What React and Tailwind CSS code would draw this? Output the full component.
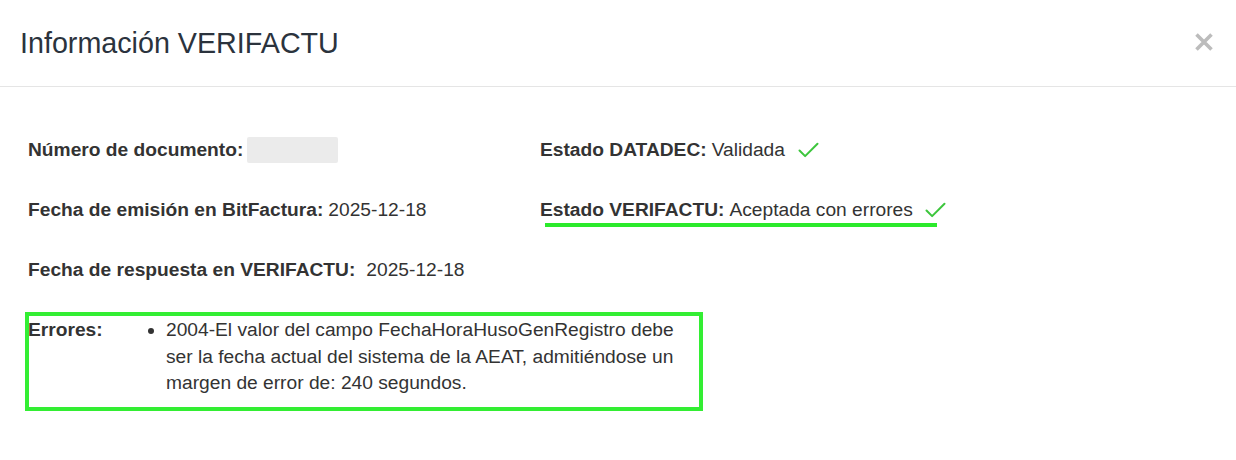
import { Check } from 'lucide-react';

// Fila de datos: etiqueta en negrita + valor
function Campo({ label, children }) {
  return (
    <div className="flex h-[60px] items-center whitespace-nowrap">
      <span className="font-bold">{label}</span>
      {children}
    </div>
  );
}

function CheckVerde({ className = '' }) {
  return <Check className={`text-[#3dc63d] ${className}`} size={27} strokeWidth={1.8} />;
}

export default function App() {
  return (
    <div
      className="w-[1236px] h-[460px] bg-white text-[#333] overflow-hidden"
      style={{ fontFamily: '"Liberation Sans", Arial, sans-serif' }}
    >
      {/* Cabecera */}
      <div className="h-[87px] flex items-center justify-between pl-[20px] pr-[22px] border-b border-[#e5e5e5]">
        <h1 className="text-[28.7px] leading-none text-[#2b333d] pt-[1px]">Información VERIFACTU</h1>
        <button className="w-[20px] h-[20px] mb-[3px]" aria-label="Cerrar">
          <svg viewBox="0 0 20 20" className="w-[20px] h-[20px]">
            <path d="M2.5 2.5 L17.5 17.5 M17.5 2.5 L2.5 17.5" stroke="#bcbcbc" strokeWidth="3.6" strokeLinecap="butt" />
          </svg>
        </button>
      </div>

      {/* Cuerpo */}
      <div className="pt-[33px] pl-[28px] text-[19.2px]">
        <div className="grid grid-cols-[512px_1fr]">
          <div>
            <Campo label="Número de documento:">
              <span className="ml-[4px] w-[91px] h-[26px] rounded-[2px] bg-[#ebebeb]" />
            </Campo>
            <Campo label="Fecha de emisión en BitFactura:">
              <span className="ml-[5px]">2025-12-18</span>
            </Campo>
            <Campo label="Fecha de respuesta en VERIFACTU:">
              <span className="ml-[11px]">2025-12-18</span>
            </Campo>
          </div>
          <div>
            <Campo label="Estado DATADEC:">
              <span className="ml-[5px]">Validada</span>
              <CheckVerde className="ml-[10px] mt-[1px]" />
            </Campo>
            <div className="relative">
              <Campo label="Estado VERIFACTU:">
                <span className="ml-[5px]">Aceptada con errores</span>
                <CheckVerde className="ml-[9px] mt-[1px]" />
              </Campo>
              <span className="absolute left-[5px] top-[43px] w-[392px] h-[4px] bg-[#2bea2b]" />
            </div>
          </div>
        </div>

        {/* Errores */}
        <div className="relative mt-[17px] flex leading-[26.5px]">
          <span className="absolute -left-[3px] -top-[5px] w-[678px] h-[99px] border-[4px] border-[#33ee33]" />
          <span className="w-[120px] shrink-0 font-bold">Errores:</span>
          <ul className="list-disc pl-[18px] w-[530px]">
            <li>
              2004-El valor del campo FechaHoraHusoGenRegistro debe ser la fecha actual del sistema de la AEAT,
              admitiéndose un margen de error de: 240 segundos.
            </li>
          </ul>
        </div>
      </div>
    </div>
  );
}
